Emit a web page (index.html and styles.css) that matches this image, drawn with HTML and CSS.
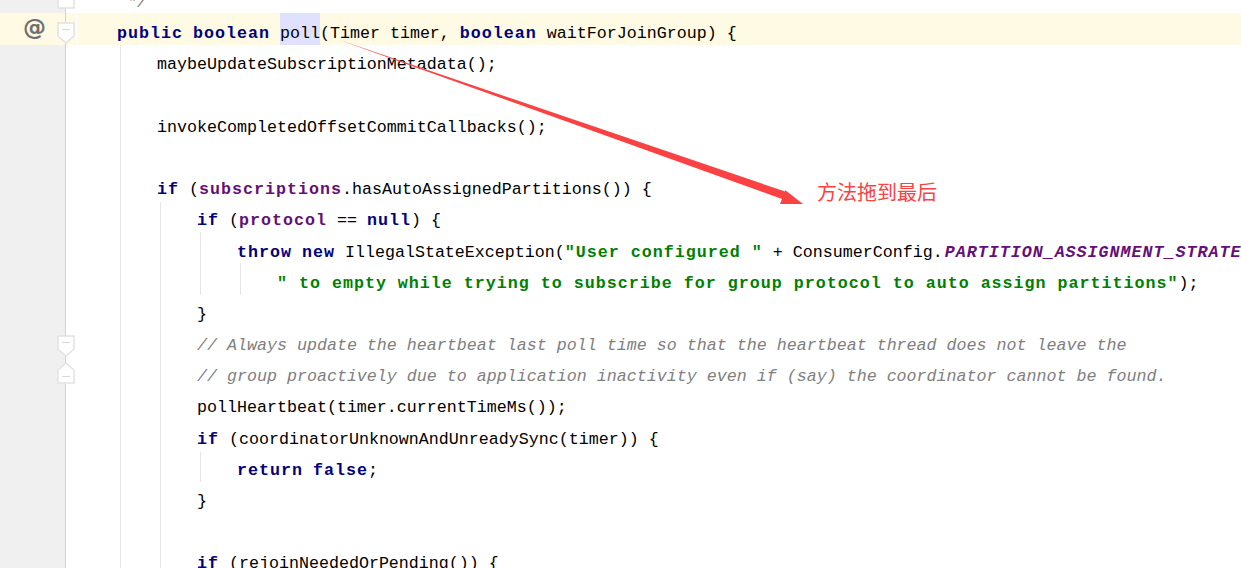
FILE: index.html
```html
<!DOCTYPE html>
<html lang="en">
<head>
<meta charset="utf-8">
<title>poll</title>
<link rel="stylesheet" href="styles.css">
</head>
<body>
<div class="editor">
  <div class="gutter">
    <svg class="fold fold-top" viewBox="0 0 18 9"><path d="M1 -1V8H17V-1" /></svg>
    <div class="gutter-current">
      <span class="at">@</span>
      <svg class="fold fold-method" viewBox="0 0 18 22"><path d="M1 1H17V14L9 21L1 14Z" /><path class="dash" d="M5 7.5H13" /></svg>
    </div>
    <svg class="fold fold-end" viewBox="0 0 18 22"><path d="M1 1H17V14L9 21L1 14Z" /><path class="dash" d="M5 7.5H13" /></svg>
    <svg class="fold fold-start" viewBox="0 0 18 22"><path d="M1 21H17V8L9 1L1 8Z" /><path class="dash" d="M5 14.5H13" /></svg>
  </div>
  <div class="code">
    <i class="guide g1"></i><i class="guide g2"></i><i class="guide g3"></i><i class="guide g4"></i><i class="guide g5"></i>
    <div class="line cmt">     */</div>
    <div class="line current">    <b class="kw">public</b> <b class="kw">boolean</b> <span class="usage">poll</span>(Timer timer, <b class="kw">boolean</b> waitForJoinGroup) {</div>
    <div class="line">        maybeUpdateSubscriptionMetadata();</div>
    <div class="line"></div>
    <div class="line">        invokeCompletedOffsetCommitCallbacks();</div>
    <div class="line"></div>
    <div class="line">        <b class="kw">if</b> (<b class="field">subscriptions</b>.hasAutoAssignedPartitions()) {</div>
    <div class="line">            <b class="kw">if</b> (<b class="field">protocol</b> == <b class="kw">null</b>) {</div>
    <div class="line">                <b class="kw">throw</b> <b class="kw">new</b> IllegalStateException(<b class="str">"User configured "</b> + ConsumerConfig.<b class="const">PARTITION_ASSIGNMENT_STRATEGY_POLICY</b></div>
    <div class="line">                    <b class="str">" to empty while trying to subscribe for group protocol to auto assign partitions"</b>);</div>
    <div class="line">            }</div>
    <div class="line cmt">            // Always update the heartbeat last poll time so that the heartbeat thread does not leave the</div>
    <div class="line cmt">            // group proactively due to application inactivity even if (say) the coordinator cannot be found.</div>
    <div class="line">            pollHeartbeat(timer.currentTimeMs());</div>
    <div class="line">            <b class="kw">if</b> (coordinatorUnknownAndUnreadySync(timer)) {</div>
    <div class="line">                <b class="kw">return</b> <b class="kw">false</b>;</div>
    <div class="line">            }</div>
    <div class="line"></div>
    <div class="line">            <b class="kw">if</b> (rejoinNeededOrPending()) {</div>
  </div>
  <svg class="arrow" viewBox="0 0 1241 568"><path d="M338 39.5L785 191.5L785 190L803 204L780 204L782 199Z" /></svg>
  <span class="note">方法拖到最后</span>
</div>
</body>
</html>
```
FILE: styles.css
```css
html, body {
  margin: 0;
  background: #fff;
}

.editor {
  position: relative;
  display: flex;
  width: 1241px;
  height: 568px;
  overflow: hidden;
  font-family: "Liberation Mono", monospace;
  font-size: 16.67px;
  color: #000;
}

.gutter {
  position: relative;
  flex: 0 0 77px;
  padding-top: 13px;
  box-sizing: border-box;
  background: linear-gradient(to right, #f0f0f0 65px, #d2d2d2 65px, #d2d2d2 66px, #fff 66px);
}

.gutter-current {
  position: relative;
  height: 32px;
  margin-right: 1px;
  background: linear-gradient(to right, #fffae3 65px, #d2d2d2 65px, #d2d2d2 66px, #fffae3 66px);
}

.at {
  position: absolute;
  left: 23px;
  top: 1px;
  font: bold 23px "DejaVu Sans", sans-serif;
  color: #6f6f6f;
}

.fold {
  position: absolute;
  left: 57px;
  width: 18px;
  height: 22px;
  fill: #fff;
  stroke: #e2e2e2;
  stroke-width: 1.5;
}

.fold .dash {
  stroke: #d8d8d8;
  stroke-width: 1;
}

.fold-top { top: 0; height: 9px; }
.fold-method { top: 9px; }
.fold-end { top: 335px; }
.fold-start { top: 362px; }

.code {
  position: relative;
  flex: 1;
  min-width: 0;
  margin-top: -18px;
}

.line {
  position: relative;
  height: 31.2px;
  line-height: 41px;
  white-space: pre;
  overflow: hidden;
}

.line.current {
  height: 32px;
  margin-bottom: -0.8px;
  background: #fffae3;
}

.kw { color: #000080; font-weight: bold; letter-spacing: 1px; }
.str { color: #008000; font-weight: bold; letter-spacing: 1px; }
.field { color: #660e7a; font-weight: bold; letter-spacing: 1px; }
.const { margin-left: 2px; color: #660e7a; font-weight: bold; font-style: italic; letter-spacing: 1px; }
.cmt { color: #808080; font-style: italic; }
.usage { padding: 30px 0; background: #e0e0ff; }

.guide {
  position: absolute;
  z-index: 1;
  width: 1px;
  background: #e6e6e6;
}

.g1 { left: 43px; top: 63px; bottom: 0; }
.g2 { left: 83px; top: 220px; bottom: 0; }
.g3 { left: 123px; top: 250px; height: 63px; }
.g4 { left: 163px; top: 281px; height: 32px; }
.g5 { left: 123px; top: 470px; height: 30px; }

.arrow {
  position: absolute;
  inset: 0;
  width: 1241px;
  height: 568px;
  fill: #fa4243;
  pointer-events: none;
}

.note {
  position: absolute;
  left: 817px;
  top: 178px;
  font: 20px/28px "Noto Sans CJK SC", sans-serif;
  color: #fa4243;
}
```
